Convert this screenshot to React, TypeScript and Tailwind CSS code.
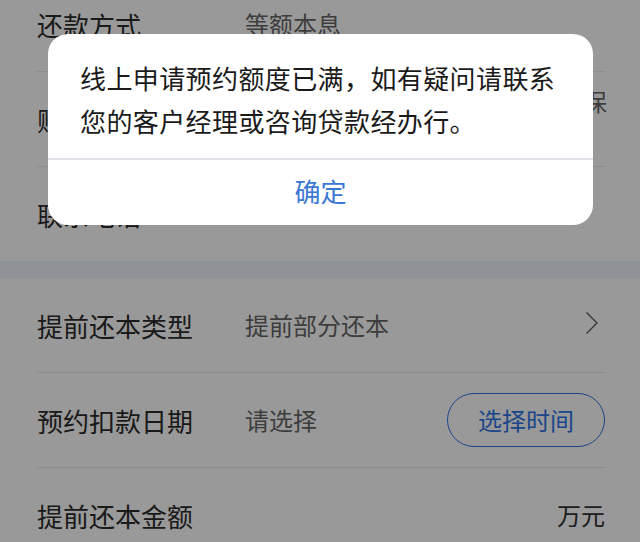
import type { ReactNode } from "react";

const FONT = { fontFamily: '"Noto Sans CJK SC", "Noto Sans", sans-serif' };

function Row({ label, value, right, last }: { label: ReactNode; value?: ReactNode; right?: ReactNode; last?: boolean }) {
  return (
    <div className={`ml-[37px] mr-[35px] flex items-center ${last ? "h-[94px]" : "h-[95px] border-b border-[#ececee]"}`}>
      <div className="w-[208px] shrink-0 text-[26px] text-[#2c2c2c] flex items-center">{label}</div>
      <div className="flex-1 text-[24px] text-[#666]">{value}</div>
      {right}
    </div>
  );
}

function Chevron() {
  return (
    <svg width="14" height="24" viewBox="0 0 14 24" fill="none" stroke="#555" strokeWidth="1.3" className="mr-[6px] mb-[4px]">
      <polyline points="1.5,1.5 12,12 1.5,22.5" />
    </svg>
  );
}

export default function App() {
  return (
    <div className="relative w-[640px] h-[542px] overflow-hidden bg-[#eef3fb]" style={FONT}>
      {/* upper card, first row scrolled partly off-screen */}
      <div className="bg-white -mt-[23px]">
        <Row label="还款方式" value="等额本息" />
        <Row label="账户信息" right={<span className="text-[24px] text-[#666] pb-[36px] -mr-[2px]">担保</span>} />
        <Row
          label={
            <>
              联系电话
              <span className="ml-[14px] inline-flex w-[20px] h-[20px] rounded-full bg-[#4a9df5] text-white text-[13px] items-center justify-center">?</span>
            </>
          }
          last
        />
      </div>

      <div className="h-[18px]" />

      <div className="bg-white -mt-[1px]">
        <Row label="提前还本类型" value="提前部分还本" right={<Chevron />} />
        <Row
          label="预约扣款日期"
          value="请选择"
          right={
            <button className="w-[158px] h-[54px] rounded-full border-[1.5px] border-[#2f74e6] text-[24px] text-[#2f74e6] flex items-center justify-center">
              选择时间
            </button>
          }
        />
        <Row label="提前还本金额" right={<span className="text-[24px] text-[#333]">万元</span>} last />
      </div>

      {/* mask */}
      <div className="absolute inset-0 bg-black/40" />

      {/* alert */}
      <div className="absolute left-[48px] top-[34px] w-[545px] h-[191px] bg-white rounded-[20px] flex flex-col">
        <p className="px-[32px] pt-[22px] pb-[16px] text-[26px] leading-[43px] tracking-[0.4px] text-[#1a1a1a]">
          线上申请预约额度已满，如有疑问请联系您的客户经理或咨询贷款经办行。
        </p>
        <div className="h-[2px] bg-[#dfe2e7]" />
        <button className="flex-1 pb-[4px] text-[26px] text-[#3a76d4]">确定</button>
      </div>
    </div>
  );
}
